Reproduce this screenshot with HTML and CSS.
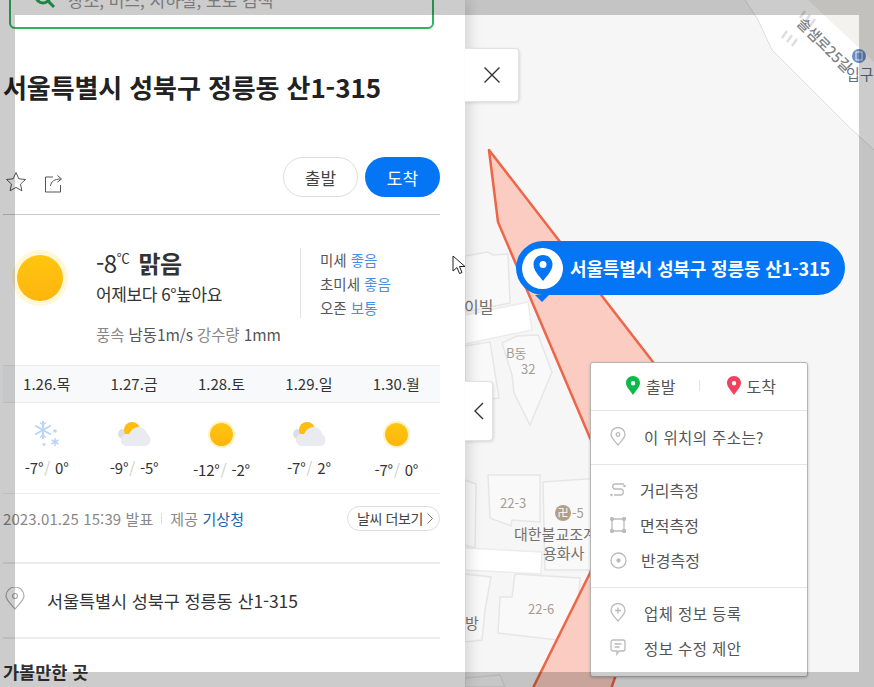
FILE: index.html
```html
<!DOCTYPE html>
<html lang="ko">

<head>
    <meta charset="UTF-8">
    <title>서울특별시 성북구 정릉동 산1-315</title>
    <link rel="stylesheet" href="styles.css">
</head>

<body>
    <div class="screen">
        <!-- map canvas -->
        <svg class="map" width="874" height="687" viewBox="0 0 874 687">
            <polygon class="block-gray" points="808,0 874,0 874,70"/>
            <polygon class="road" points="745,0 758,20 772,50 850,128 874,150 874,62 808,0"/>
            <path class="road-line" d="M745,0 L758,20 L772,50 L848,126 L874,150"/>
            <path class="road-hatch" d="M782,38 L787,31 M787,42 L792,35 M792,46 L797,39 M800,18 L805,11 M805,22 L810,15 M810,26 L815,19"/>
            <g class="building">
                <polygon points="465,256 488,252 493,255 508,254 510,303 465,312"/>
                <polygon class="plain" points="465,315 528,302 532,330 465,344"/>
                <polygon points="502,343 517,336 538,335 552,372 530,425 514,393 512,375"/>
                <polygon points="465,346 490,342 499,398 465,402"/>
                <polygon points="488,475 540,475 540,522 512,520 511,526 490,518"/>
                <polygon points="543,482 600,478 600,570 545,570"/>
                <polygon points="465,480 476,484 475,548 465,545"/>
                <polygon class="plain" points="465,548 542,552 541,574 465,570"/>
                <polygon points="465,574 491,577 485,610 482,640 465,642"/>
                <polygon points="515,574 580,578 575,642 498,633 500,597 512,597"/>
                <polygon points="465,678 500,675 505,687 465,687"/>
            </g>
            <polygon class="parcel" points="489,150 653,362 700,440 607,700 527,700 590,573 620,500 590,438 498,222"/>
            <text class="label big" x="464" y="313">이빌</text>
            <text class="label small" x="506" y="358">B동</text>
            <text class="label small" x="521" y="374">32</text>
            <text class="label small" x="500" y="508">22-3</text>
            <circle class="temple" cx="563" cy="513" r="8"/>
            <text class="temple-mark" x="563" y="517">卍</text>
            <text class="label small" x="572" y="518">-5</text>
            <text class="label" x="514" y="540">대한불교조계</text>
            <text class="label" x="543" y="559">용화사</text>
            <text class="label small" x="528" y="614">22-6</text>
            <text class="label" x="465" y="629">방</text>
            <text class="road-name" transform="translate(796,24) rotate(45)">솔샘로25길</text>
            <circle class="gate" cx="859" cy="56" r="7"/>
            <rect class="gate-mark" x="856" y="52" width="6" height="8"/>
            <text class="label gate-name" x="846" y="80">입구</text>
        </svg>

        <!-- selected place label -->
        <div class="place-tag">
            <span class="place-tag-icon">
                <svg width="20" height="26" viewBox="0 0 20 26"><path fill="#0475f4" fill-rule="evenodd" d="M10 0C4.500 0 .5 4.200 .5 9.500c0 6 6 12 9.500 16.500 3.500-4.500 9.500-10.500 9.500-16.500C19.500 4.200 15.500 0 10 0zm0 6a3.500 3.500 0 1 1 0 7 3.500 3.500 0 0 1 0-7z"/></svg>
            </span>
            서울특별시 성북구 정릉동 산1-315
        </div>

        <!-- left panel -->
        <div class="panel">
            <div class="search">
                <svg width="22" height="22" viewBox="0 0 22 22" fill="none" stroke="#21a84f" stroke-width="3"><circle cx="9" cy="8" r="7"/><path d="M14 13l6 6"/></svg>
                <span>장소, 버스, 지하철, 도로 검색</span>
            </div>
            <h1 class="title">서울특별시 성북구 정릉동 산1-315</h1>
            <div class="actions">
                <svg class="icon-star" width="22" height="22" viewBox="0 0 22 22"><path fill="none" stroke="#555" d="M11 1.500l2.800 6.300 6.700.7-5 4.600 1.400 6.700L11 16.400 5.100 19.800l1.400-6.700-5-4.600 6.700-.7z"/></svg>
                <svg class="icon-share" width="20" height="20" viewBox="0 0 20 20" fill="none" stroke="#555"><path d="M9 4H1.500v15h15v-7"/><path d="M6.500 13c.5-4.500 4-7 10-7"/><path d="M13.500 2.500l4 3.500-4 3"/></svg>
                <span class="spacer"></span>
                <button class="btn">출발</button>
                <button class="btn btn-blue">도착</button>
            </div>

            <div class="today">
                <div class="sun-big"></div>
                <div class="today-info">
                    <div class="today-temp">-8<sup>℃</sup> <b>맑음</b></div>
                    <div class="today-diff">어제보다 6°높아요</div>
                    <div class="today-wind"><em>풍속</em> 남동1m/s <em>강수량</em> 1mm</div>
                </div>
                <ul class="air">
                    <li>미세 <span>좋음</span></li>
                    <li>초미세 <span>좋음</span></li>
                    <li>오존 <span>보통</span></li>
                </ul>
            </div>

            <div class="days">
                <div>1.26.목</div>
                <div>1.27.금</div>
                <div>1.28.토</div>
                <div>1.29.일</div>
                <div>1.30.월</div>
            </div>
            <div class="forecast">
                <div class="day">
                    <svg class="day-icon" width="26" height="26" viewBox="0 0 26 26" fill="none" stroke="#bcd4f6" stroke-width="2"><path d="M9 0v18M1.200 4.500l15.600 9M1.200 13.500l15.600-9"/><path d="M6 1.500l3 2.500 3-2.500M6 16.500l3-2.500 3 2.500" stroke-width="1.400"/><path d="M21 17v8M17.500 19l7 4M17.500 23l7-4" stroke-width="1.500"/><circle cx="21" cy="10" r="1.800" fill="#bcd4f6" stroke="none"/><circle cx="10" cy="23.500" r="1.400" fill="#bcd4f6" stroke="none"/></svg>
                    <div class="temps">-7°<i>/</i> 0°</div>
                </div>
                <div class="day">
                    <svg class="day-icon" width="34" height="26" viewBox="0 0 34 26"><use href="#cloudy"/></svg>
                    <div class="temps">-9°<i>/</i> -5°</div>
                </div>
                <div class="day">
                    <div class="day-icon"><div class="sun-small"></div></div>
                    <div class="temps">-12°<i>/</i> -2°</div>
                </div>
                <div class="day">
                    <svg class="day-icon" width="34" height="26" viewBox="0 0 34 26">
                        <defs>
                            <g id="cloudy">
                                <circle cx="6" cy="13" r="5" fill="#dcdee2"/>
                                <circle cx="15" cy="9" r="8" fill="#ffbe0d"/>
                                <path fill="#e9ebf1" d="M10 25c-3.500 0-6-2.500-6-6s2.500-6 6-6c1-.2 1.500 0 2 .3C14 9 17.500 6 21.500 6c4.500 0 8 3 9 7.500 2 1 3 3 3 5.500 0 3.500-2.500 6-6 6z"/>
                            </g>
                        </defs>
                        <use href="#cloudy"/>
                    </svg>
                    <div class="temps">-7°<i>/</i> 2°</div>
                </div>
                <div class="day">
                    <div class="day-icon"><div class="sun-small"></div></div>
                    <div class="temps">-7°<i>/</i> 0°</div>
                </div>
            </div>

            <div class="source">
                <span>2023.01.25 15:39 발표</span>
                <span class="source-sep"></span>
                <span>제공 <a href="#">기상청</a></span>
                <span class="spacer"></span>
                <a class="more" href="#">날씨 더보기<svg width="6" height="11" viewBox="0 0 6 11" fill="none" stroke="#777"><path d="M.5 .5l5 5-5 5"/></svg></a>
            </div>

            <div class="address">
                <svg width="20" height="23" viewBox="0 0 20 23" fill="none" stroke="#aaa" stroke-width="1.200"><path d="M10 22C6 17 1 13 1 9a9 9 0 0 1 18 0c0 4-5 8-9 13z"/><circle cx="10" cy="9" r="2.500"/></svg>
                서울특별시 성북구 정릉동 산1-315
            </div>
            <h2 class="nearby">가볼만한 곳</h2>
        </div>

        <!-- buttons on the panel edge -->
        <button class="edge-btn close-btn"><svg width="18" height="18" viewBox="0 0 18 18" stroke="#333" stroke-width="1.400"><path d="M1.500 1.500l15 15M16.500 1.500l-15 15"/></svg></button>
        <button class="edge-btn fold-btn"><svg width="10" height="18" viewBox="0 0 10 18" fill="none" stroke="#333" stroke-width="1.400"><path d="M9 1L1 9l8 8"/></svg></button>

        <!-- right click menu -->
        <div class="menu">
            <div class="menu-top">
                <div><svg width="14" height="19" viewBox="0 0 14 19"><path fill="#0cb94a" fill-rule="evenodd" d="M7 0C3 0 0 3 0 7c0 4 4.500 8 7 12 2.500-4 7-8 7-12 0-4-3-7-7-7zm0 5a2.200 2.200 0 1 1 0 4.400A2.200 2.200 0 0 1 7 5z"/></svg>출발</div>
                <span class="menu-top-sep"></span>
                <div><svg width="14" height="19" viewBox="0 0 14 19"><path fill="#f2415f" fill-rule="evenodd" d="M7 0C3 0 0 3 0 7c0 4 4.500 8 7 12 2.500-4 7-8 7-12 0-4-3-7-7-7zm0 5a2.200 2.200 0 1 1 0 4.400A2.200 2.200 0 0 1 7 5z"/></svg>도착</div>
            </div>
            <div class="menu-group menu-where">
                <div class="menu-item wide"><svg class="menu-icon" width="16" height="19" viewBox="0 0 16 19"><path d="M8 18C5 14 1 11 1 7.500a7 7 0 0 1 14 0C15 11 11 14 8 18z"/><circle cx="8" cy="7.500" r="1.800"/></svg>이 위치의 주소는?</div>
            </div>
            <div class="menu-group menu-measure">
                <div class="menu-item"><svg class="menu-icon" width="16" height="16" viewBox="0 0 16 16"><path d="M14 2H5C2 2 2 7 5 7h6c3 0 3 6 0 6H4"/><circle cx="14.500" cy="4" r=".6"/><circle cx="1.500" cy="13" r=".6"/></svg>거리측정</div>
                <div class="menu-item"><svg class="menu-icon" width="16" height="16" viewBox="0 0 16 16"><path d="M2 2h12v12H2z"/><g fill="#bbb"><circle cx="2" cy="2" r="1.500"/><circle cx="14" cy="2" r="1.500"/><circle cx="2" cy="14" r="1.500"/><circle cx="14" cy="14" r="1.500"/></g></svg>면적측정</div>
                <div class="menu-item"><svg class="menu-icon" width="17" height="17" viewBox="0 0 17 17"><circle cx="8.500" cy="8.500" r="7.500"/><circle cx="8.500" cy="8.500" r="1.500" fill="#bbb"/></svg>반경측정</div>
            </div>
            <div class="menu-group menu-info">
                <div class="menu-item wide"><svg class="menu-icon" width="16" height="19" viewBox="0 0 16 19"><path d="M8 18C5 14 1 11 1 7.500a7 7 0 0 1 14 0C15 11 11 14 8 18z"/><path d="M8 4.500v6M5 7.500h6"/></svg>업체 정보 등록</div>
                <div class="menu-item wide"><svg class="menu-icon" width="16" height="17" viewBox="0 0 16 17"><path d="M3 1h10c1 0 2 1 2 2v7c0 1-1 2-2 2H9l-2 3v-3H3c-1 0-2-1-2-2V3c0-1 1-2 2-2z"/><path d="M4.500 5h7M4.500 8h5"/></svg>정보 수정 제안</div>
            </div>
        </div>

        <!-- mouse pointer -->
        <svg class="pointer" width="14" height="21" viewBox="0 0 14 21"><path fill="#fff" stroke="#222" d="M1 1v15l4-3.500 2.500 6 2.500-1-2.500-6H13z"/></svg>

        <!-- dim frame around the window -->
        <div class="frame"></div>
    </div>
</body>

</html>
```

FILE: styles.css
```css
* {
    box-sizing: border-box;
}

body {
    margin: 0;
    font-family: "Noto Sans CJK KR", "Noto Sans", sans-serif;
    color: #333;
}

.screen {
    position: relative;
    width: 874px;
    height: 687px;
    overflow: hidden;
    background: #f6f6f6;
}

/* map */
.map {
    position: absolute;
    left: 0;
    top: 0;
    font-family: "Noto Sans CJK KR", sans-serif;
}

.road {
    fill: #fff;
}

.road-line {
    fill: none;
    stroke: #dcdcdc;
}

.road-hatch {
    stroke: #dedede;
    stroke-width: 2.5;
}

.block-gray {
    fill: #f4f2ee;
}

.building polygon {
    fill: #f9f9f9;
    stroke: #e6e6e6;
    stroke-width: 1.5;
}

.building .plain {
    fill: #fff;
    stroke: #ececec;
}

.parcel {
    fill: #fbcdc2;
    stroke: #ee6547;
    stroke-width: 2.5;
    stroke-linejoin: round;
}

.label {
    font-size: 15px;
    fill: #77706a;
}

.label.big {
    font-size: 16px;
}

.label.small {
    font-size: 13px;
    fill: #a89c92;
}

.temple {
    fill: #b59f83;
}

.temple-mark {
    font-size: 11px;
    fill: #fff;
    text-anchor: middle;
}

.road-name {
    font-size: 14.5px;
    font-weight: 500;
    fill: #808285;
}

.gate {
    fill: #6a8bc4;
}

.gate-mark {
    fill: none;
    stroke: #e8edf6;
}

.gate-name {
    fill: #5f6f8c;
}

.place-tag {
    position: absolute;
    left: 516px;
    top: 241px;
    width: 329px;
    height: 54px;
    display: flex;
    align-items: center;
    gap: 7px;
    padding-left: 6px;
    border-radius: 27px;
    background: #0475f4;
    color: #fff;
    font-size: 18px;
    font-weight: 700;
    letter-spacing: -0.15px;
}

.place-tag::after {
    content: "";
    position: absolute;
    left: 19px;
    bottom: -7px;
    border: 7px solid transparent;
    border-bottom: 0;
    border-top-color: #0475f4;
}

.place-tag-icon {
    width: 41px;
    height: 41px;
    border-radius: 50%;
    background: #fff;
    display: flex;
    align-items: center;
    justify-content: center;
}

/* panel */
.panel {
    position: relative;
    display: flow-root;
    width: 465px;
    height: 687px;
    padding: 0 25px 0 3px;
    background: #fff;
    box-shadow: 3px 0 14px rgba(0, 0, 0, 0.16);
}

.search {
    display: flex;
    align-items: center;
    gap: 12px;
    height: 60px;
    width: 425px;
    margin: -31px 0 0 6px;
    padding: 0 0 0 23px;
    border: 2px solid #2db55d;
    border-radius: 6px;
    font-size: 17px;
    color: #999;
}

.title {
    margin: 40px 0 0;
    font-size: 26px;
    line-height: 36px;
    font-weight: 700;
    color: #222;
    letter-spacing: -0.1px;
}

.actions {
    display: flex;
    align-items: center;
    height: 58px;
    margin-top: 52px;
    padding-bottom: 17px;
    border-bottom: 1px solid #ccc;
}

.icon-star {
    margin: 10px 0 0 2px;
}

.icon-share {
    margin: 12px 0 0 17px;
}

.spacer {
    flex: 1;
}

.btn {
    width: 75px;
    height: 40px;
    margin-left: 7px;
    border: 1px solid #ddd;
    border-radius: 20px;
    background: #fff;
    color: #444;
    font: 400 17px "Noto Sans CJK KR", sans-serif;
}

.btn-blue {
    border: none;
    background: #0475f4;
    color: #fff;
}

/* today weather */
.today {
    display: flex;
    height: 150px;
    padding-top: 33px;
}

.sun-big {
    width: 46px;
    height: 46px;
    margin: 7px 0 0 14px;
    border-radius: 50%;
    background: linear-gradient(#ffc60f, #ffb40e);
    box-shadow: 0 0 0 5px #fff7d6;
}

.today-info {
    width: 204px;
    margin-left: 33px;
}

.today-temp {
    height: 30px;
    font-size: 24px;
    line-height: 30px;
    letter-spacing: -0.5px;
}

.today-temp sup {
    font-size: 13px;
    line-height: 0;
    vertical-align: 10px;
}

.today-temp b {
    margin-left: 3px;
    font-weight: 700;
}

.today-diff {
    margin-top: 3px;
    font-size: 17px;
    line-height: 26px;
    letter-spacing: -0.4px;
}

.today-wind {
    margin-top: 15px;
    font-size: 15.5px;
    line-height: 24px;
    color: #555;
    letter-spacing: -0.1px;
}

.today-wind em {
    font-style: normal;
    color: #888;
}

.air {
    list-style: none;
    height: 70px;
    margin: 0;
    padding: 0 0 0 19px;
    border-left: 1px solid #e4e4e4;
    font-size: 14.5px;
    line-height: 24px;
    color: #555;
}

.air span {
    color: #4a8fe3;
}

/* forecast */
.days {
    display: grid;
    grid-template-columns: repeat(5, 1fr);
    height: 38px;
    background: #f7f9fa;
    border-top: 1px solid #eaeaea;
    border-bottom: 1px solid #eaeaea;
    font-size: 15px;
    line-height: 35px;
    text-align: center;
}

.forecast {
    display: grid;
    grid-template-columns: repeat(5, 1fr);
    height: 91px;
    padding-top: 18px;
    border-bottom: 1px solid #eee;
}

.day {
    text-align: center;
}

.day-icon {
    display: block;
    height: 26px;
    margin: 0 auto;
}

.sun-small {
    width: 23px;
    height: 23px;
    margin: 2px auto 0;
    border-radius: 50%;
    background: linear-gradient(#ffc60f, #ffb40e);
    box-shadow: 0 0 0 2px #fff3c4;
}

.temps {
    margin-top: 9px;
    font-size: 15px;
    line-height: 24px;
    letter-spacing: -0.2px;
}

.temps i {
    margin: 0 1px;
    font-style: normal;
    color: #ccc;
}

.source {
    display: flex;
    align-items: center;
    height: 70px;
    padding-bottom: 20px;
    border-bottom: 2px solid #ececec;
    font-size: 15px;
    letter-spacing: 0.1px;
    color: #888;
}

.source a {
    text-decoration: none;
}

.source span a {
    color: #1c5fae;
}

.source-sep {
    width: 1px;
    height: 11px;
    margin: 0 8px;
    background: #ddd;
}

.more {
    display: flex;
    align-items: center;
    gap: 4px;
    height: 25px;
    padding: 0 6px 0 9px;
    border: 1px solid #ddd;
    border-radius: 13px;
    color: #444;
    font-size: 14px;
    letter-spacing: -0.4px;
}

.address {
    display: flex;
    align-items: center;
    gap: 22px;
    height: 75px;
    padding-left: 2px;
    border-bottom: 2px solid #ececec;
    font-size: 17.5px;
    letter-spacing: -0.1px;
}

.address svg {
    margin-top: -5px;
}

.nearby {
    margin: 21px 0 0;
    font-size: 17.5px;
    line-height: 24px;
    font-weight: 700;
}

/* buttons at the panel edge */
.edge-btn {
    position: absolute;
    left: 465px;
    display: flex;
    align-items: center;
    justify-content: center;
    padding: 0;
    border: 1px solid #e2e2e2;
    border-left: none;
    border-radius: 0 4px 4px 0;
    background: #fff;
    box-shadow: 1px 1px 3px rgba(0, 0, 0, 0.12);
}

.close-btn {
    top: 48px;
    width: 54px;
    height: 54px;
}

.fold-btn {
    top: 381px;
    width: 28px;
    height: 60px;
}

/* context menu */
.menu {
    position: absolute;
    left: 590px;
    top: 362px;
    width: 218px;
    height: 315px;
    border: 1px solid #b4b4b4;
    border-radius: 3px;
    background: #fff;
    box-shadow: 0 1px 3px rgba(0, 0, 0, 0.2);
    font-size: 16px;
    color: #555;
}

.menu-top {
    display: flex;
    align-items: center;
    justify-content: center;
    gap: 23px;
    height: 48px;
    padding: 0 0 2px 4px;
    border-bottom: 1px solid #e6e6e6;
}

.menu-top div {
    display: flex;
    align-items: center;
    gap: 6px;
}

.menu-top-sep {
    width: 1px;
    height: 11px;
    margin-right: 4px;
    background: #e4e4e4;
}

.menu-group {
    display: flex;
    flex-direction: column;
    justify-content: center;
    padding-left: 19px;
    border-bottom: 1px solid #e6e6e6;
}

.menu-where {
    height: 54px;
    padding-bottom: 2px;
}

.menu-measure {
    height: 123px;
    padding-bottom: 2px;
}

.menu-info {
    height: 88px;
    padding-bottom: 4px;
    border-bottom: none;
}

.menu-item {
    display: flex;
    align-items: center;
    height: 35px;
    gap: 14px;
}

.menu-item.wide {
    gap: 18px;
    font-size: 15.5px;
    letter-spacing: 0.4px;
}

.menu-icon {
    fill: none;
    stroke: #bbb;
    stroke-width: 1.3;
}

/* pointer and frame */
.pointer {
    position: absolute;
    left: 452px;
    top: 255px;
}

.frame {
    position: absolute;
    inset: 0;
    border: 15px solid rgba(0, 0, 0, 0.2);
    pointer-events: none;
}
```
